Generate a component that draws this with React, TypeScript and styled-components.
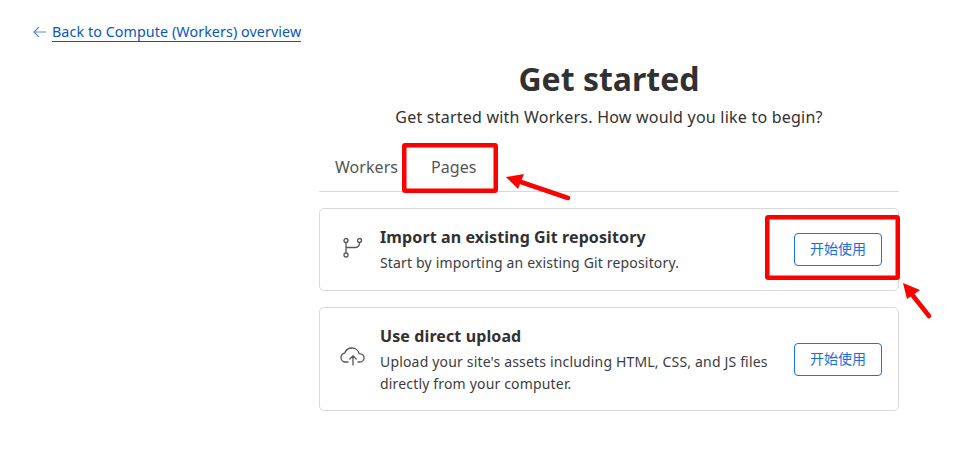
import React from "react";
import styled, { createGlobalStyle } from "styled-components";

const Global = createGlobalStyle`
  html, body { margin: 0; padding: 0; background: #fff; }
  body { font-family: "Noto Sans", "Open Sans", "Noto Sans CJK SC", sans-serif; color: #313131; }
`;

const Page = styled.div`
  position: relative;
  width: 964px;
  height: 456px;
  overflow: hidden;
  padding: 22px 0 0 33px;
  box-sizing: border-box;
`;

const BackRow = styled.div`
  display: flex;
  align-items: center;
  gap: 5px;
  height: 20px;
`;

const BackLink = styled.a`
  font-size: 14.3px;
  line-height: 19px;
  color: #0a55c4;
  border-bottom: 1px solid #0a55c4;
  letter-spacing: 0.08px;
  white-space: nowrap;
`;

const Main = styled.main`
  width: 580px;
  margin: 15px 0 0 286px;
  display: flex;
  flex-direction: column;
`;

const Title = styled.h1`
  margin: 0;
  text-align: center;
  font-size: 32px;
  line-height: 44px;
  font-weight: 700;
  color: #313131;
`;

const Subtitle = styled.p`
  margin: 5px 0 0;
  text-align: center;
  font-size: 16px;
  line-height: 22px;
  letter-spacing: 0.22px;
`;

const Tabs = styled.div`
  display: flex;
  margin-top: 17px;
  height: 46px;
  border-bottom: 1px solid #d9d9d9;
`;

const Tab = styled.div<{ $width: number; $left: number }>`
  width: ${(p) => p.$width}px;
  padding-left: ${(p) => p.$left}px;
  box-sizing: border-box;
  font-size: 16px;
  line-height: 22px;
  padding-top: 11px;
  color: #555;
  letter-spacing: 0.05px;
`;

const Card = styled.section<{ $height: number }>`
  display: flex;
  align-items: center;
  height: ${(p) => p.$height}px;
  margin-top: 16px;
  border: 1px solid #d9d9d9;
  border-radius: 5px;
  box-sizing: border-box;
  padding: 0 16px 0 20px;
`;

const IconSlot = styled.div`
  width: 40px;
  flex: none;
  display: flex;
  margin-top: -4px;
  color: #555;
`;

const CardText = styled.div`
  flex: 1;
  min-width: 0;
`;

const CardTitle = styled.h2`
  margin: 0;
  font-size: 16px;
  line-height: 24px;
  font-weight: 700;
  letter-spacing: 0.11px;
  color: #313131;
`;

const CardBody = styled.p`
  margin: 3px 0 0;
  font-size: 14px;
  line-height: 21.5px;
  letter-spacing: 0.17px;
  max-width: 400px;
  color: #3c3c3c;
`;

const StartButton = styled.button`
  flex: none;
  width: 88px;
  height: 33px;
  padding: 0 0 3px;
  background: #fff;
  border: 1px solid #1a73e8;
  border-radius: 4px;
  color: #1a6de0;
  font-family: "Noto Sans CJK SC", sans-serif;
  font-size: 14px;
`;

const Overlay = styled.svg`
  position: absolute;
  inset: 0;
  pointer-events: none;
`;

const Back = () => (
  <svg width="14" height="14" viewBox="0 0 14 14" fill="none" stroke="#5b8bd6" strokeWidth="1.2">
    <path d="M13 7H1M6 2L1 7l5 5" />
  </svg>
);

const Branch = () => (
  <svg width="24" height="24" viewBox="0 0 24 24" fill="none" stroke="currentColor" strokeWidth="1.3">
    <circle cx="6" cy="4.500" r="2" />
    <circle cx="19.500" cy="4.500" r="2" />
    <circle cx="6" cy="19" r="2" />
    <path d="M6 6.500v10.500M19.500 6.500c0 3-1 5-4 5H6" />
  </svg>
);

const CloudUp = () => (
  <svg width="26" height="24" viewBox="0 0 26 24" fill="none" stroke="currentColor" strokeWidth="1.3" strokeLinecap="round">
    <path d="M8 17H5.500C3 17 1 15 1 12.500c0-2.200 1.600-4 3.700-4.400C5.800 5 8.700 3 12 3c3.600 0 6.500 2.500 7.100 5.600 2.800.2 5 2 5 4.400 0 2.300-1.900 4-4.300 4H18" />
    <path d="M13 20v-9M9.800 14l3.200-3.200 3.200 3.200" />
  </svg>
);

export default function App() {
  return (
    <Page>
      <Global />
      <BackRow>
        <Back />
        <BackLink>Back to Compute (Workers) overview</BackLink>
      </BackRow>
      <Main>
        <Title>Get started</Title>
        <Subtitle>Get started with Workers. How would you like to begin?</Subtitle>
        <Tabs>
          <Tab $width={96} $left={16}>Workers</Tab>
          <Tab $width={80} $left={16}>Pages</Tab>
        </Tabs>
        <Card $height={83}>
          <IconSlot><Branch /></IconSlot>
          <CardText>
            <CardTitle>Import an existing Git repository</CardTitle>
            <CardBody>Start by importing an existing Git repository.</CardBody>
          </CardText>
          <StartButton>开始使用</StartButton>
        </Card>
        <Card $height={104}>
          <IconSlot><CloudUp /></IconSlot>
          <CardText>
            <CardTitle>Use direct upload</CardTitle>
            <CardBody>Upload your site's assets including HTML, CSS, and JS files directly from your computer.</CardBody>
          </CardText>
          <StartButton>开始使用</StartButton>
        </Card>
      </Main>
      <Overlay width="964" height="456" viewBox="0 0 964 456">
        <rect x="404.250" y="145.250" width="91.500" height="45.500" fill="none" stroke="#ff0000" strokeWidth="4.500" rx="1" />
        <rect x="767.250" y="217.250" width="130.500" height="60.500" fill="none" stroke="#ff0000" strokeWidth="4.500" rx="1" />
        <path d="M568 198L515 180" stroke="#ff0000" strokeWidth="4.500" strokeLinecap="round" />
        <path d="M506 177L524 174L518 189Z" fill="#ff0000" />
        <path d="M929 316L910 292" stroke="#ff0000" strokeWidth="4.500" strokeLinecap="round" />
        <path d="M903 283L920 290L907 299Z" fill="#ff0000" />
      </Overlay>
    </Page>
  );
}
